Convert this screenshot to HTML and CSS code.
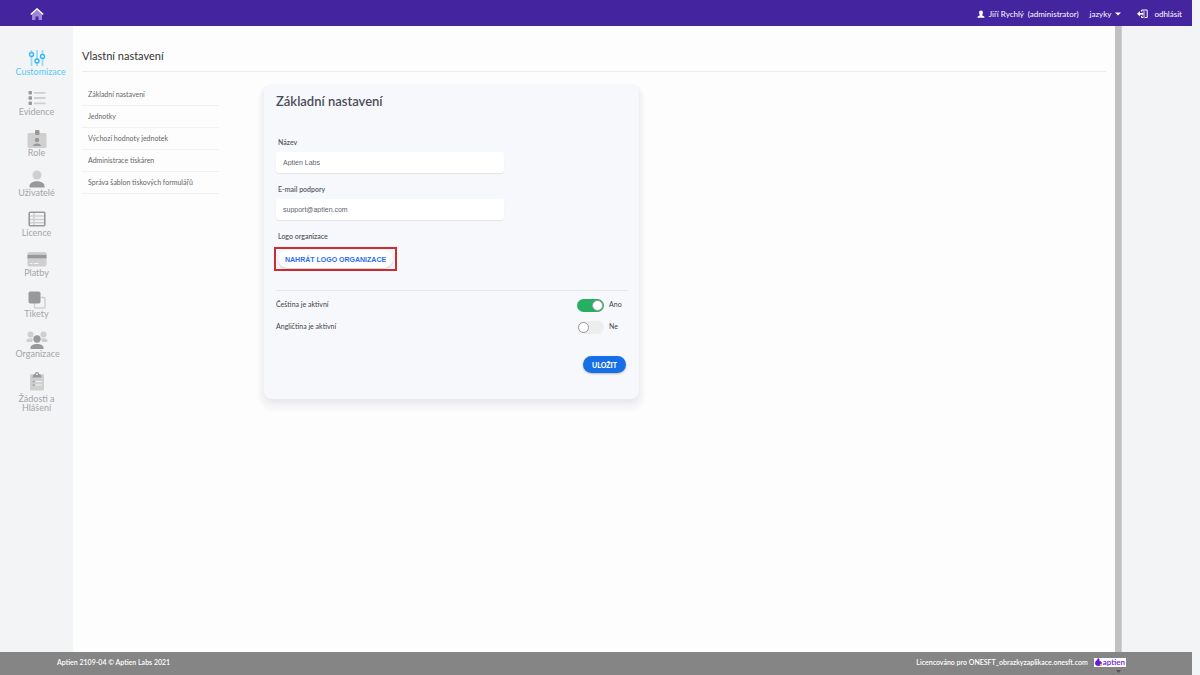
FILE: index.html
```html
<!DOCTYPE html>
<html lang="cs">
<head>
<meta charset="utf-8">
<title>Vlastní nastavení</title>
<link rel="stylesheet" href="styles.css">
</head>
<body>
<header class="topbar">
  <a class="home" href="#" aria-label="Domů"><svg width="14" height="12" viewBox="0 0 14 12"><path d="M2 6.500 7 2l5 4.500V12H8.500V8.500h-3V12H2z" fill="#9c87d3"/><path d="M.8 6.500 7 1l6.200 5.500" fill="none" stroke="#fff" stroke-width="1.600"/></svg></a>
  <nav class="account">
    <a class="user" href="#"><svg width="8" height="8" viewBox="0 0 8 8" fill="#fff"><path d="M4 .5c1.200 0 1.900.8 1.900 2C5.900 3.800 5.400 4.700 5 5.200c.3.500 2.600.4 2.600 2.500H.4c0-2.100 2.300-2 2.600-2.500-.4-.5-.9-1.400-.9-2.700 0-1.200.7-2 1.900-2z"/></svg><span>Jiří Rychlý&nbsp; (administrator)</span></a>
    <button class="lang" type="button">jazyky<svg width="6" height="4" viewBox="0 0 6 4"><path d="M0 .5h6l-3 3z" fill="#fff"/></svg></button>
    <a class="logout" href="#"><svg width="11" height="10" viewBox="0 0 11 10"><path d="M4.500 2.500V1h5.700v7.500H8M4.500 7v1.500H6" fill="none" stroke="#fff"/><path d="M5.500 1.500 8 2.200v7.300l-2.500-.8z" fill="#fff" opacity=".45"/><path d="M0 4.800 3 2v1.900h3.300v1.800H3v1.900z" fill="#fff"/></svg>odhlásit</a>
  </nav>
</header>
<div class="workspace">
  <nav class="sidebar">
    <a class="item active" href="#"><svg width="18" height="18" viewBox="0 0 18 18"><path d="M3.500 1v16M9 1v16M14.500 1v16" stroke="#9bdcf6" stroke-width="1.800"/><g fill="#f3f4f6" stroke="#2cb9f0" stroke-width="1.400"><circle cx="3.500" cy="5.500" r="2"/><circle cx="9" cy="12" r="2"/><circle cx="14.500" cy="7.500" r="2"/></g></svg><span>Customizace</span></a>
    <a class="item" href="#"><svg width="18" height="18" viewBox="0 0 18 18"><g fill="#999"><rect x=".5" y="2" width="3.500" height="3.500" rx=".8"/><rect x=".5" y="7.300" width="3.500" height="3.500" rx=".8"/><rect x=".5" y="12.600" width="3.500" height="3.500" rx=".8"/></g><path d="M6 3.800h11.500M6 9h11.500M6 14.300h11.500" stroke="#cfcfd0" stroke-width="1.800"/></svg><span>Evidence</span></a>
    <a class="item" href="#"><svg width="20" height="18" viewBox="0 0 20 18"><rect x=".5" y="3" width="19" height="15" rx="1.500" fill="#cfcfd0"/><g fill="#999"><rect x="8" y="0" width="4.500" height="5" rx="1"/><circle cx="10" cy="10" r="2.200"/><path d="M6 16c0-3.500 8-3.500 8 0z"/></g></svg><span>Role</span></a>
    <a class="item" href="#"><svg width="18" height="18" viewBox="0 0 18 18"><circle cx="9" cy="5" r="4.500" fill="#cfcfd0"/><path d="M1.500 17.500v-1.500C1.500 9.500 16.500 9.500 16.500 16v1.500z" fill="#999"/></svg><span>Uživatelé</span></a>
    <a class="item" href="#"><svg width="18" height="18" viewBox="0 0 18 18"><path d="M6 2v14M2 6h14M2 9.500h14M2 12.800h14" stroke="#cfcfd0" stroke-width="1.400"/><rect x="1.200" y="2.200" width="15.600" height="13.600" rx="1" fill="none" stroke="#999" stroke-width="1.600"/></svg><span>Licence</span></a>
    <a class="item" href="#"><svg width="20" height="18" viewBox="0 0 20 18"><rect x=".5" y="2" width="19" height="14.500" rx="1.500" fill="#cfcfd0"/><path d="M.5 4.800h19v3.500H.5z" fill="#999"/><path d="M3 13.500h2.500M7 13.500h4.500" stroke="#f3f4f6" stroke-width="1.200"/></svg><span>Platby</span></a>
    <a class="item" href="#"><svg width="18" height="18" viewBox="0 0 18 18"><path d="M12.500 6.500H16a1 1 0 0 1 1 1V16a1 1 0 0 1-1 1H7.500a1 1 0 0 1-1-1v-3.500" fill="none" stroke="#cfcfd0" stroke-width="1.500"/><rect x=".5" y=".5" width="12" height="12" rx="1.800" fill="#999"/></svg><span>Tikety</span></a>
    <a class="item" href="#"><svg width="22" height="18" viewBox="0 0 22 18"><g fill="#cfcfd0"><circle cx="4.500" cy="3.500" r="3"/><circle cx="17.500" cy="3.500" r="3"/><path d="M.5 11V9.800c0-2.500 4-3 6.500-2L6 11zM21.500 11V9.800c0-2.500-4-3-6.500-2L16 11z"/></g><g fill="#999"><circle cx="11" cy="8" r="3.700"/><path d="M4.500 18v-1.300c0-5 13-5 13 0V18z"/></g></svg><span>Organizace</span></a>
    <a class="item tall" href="#"><svg width="16" height="20" viewBox="0 0 16 20"><rect x="1" y="3" width="14" height="16.500" rx="1.500" fill="#cfcfd0"/><path d="M3.500 6.500C3.500 4 5 3.500 5.800 3 6 .3 10 .3 10.200 3c.8.500 2.300 1 2.300 3.500z" fill="#999"/><circle cx="8" cy="3.200" r=".9" fill="#f3f4f6"/><path d="M3.800 10.500h1.600M3.800 14h1.600" stroke="#999" stroke-width="1.600"/><path d="M6.800 10.500h6M6.800 14h6" stroke="#f3f4f6"/></svg><span>Žádosti a<br>Hlášení</span></a>
  </nav>
  <main class="main">
    <h1 class="page-title">Vlastní nastavení</h1>
    <div class="columns">
      <nav class="menu">
        <a href="#">Základní nastavení</a>
        <a href="#">Jednotky</a>
        <a href="#">Výchozí hodnoty jednotek</a>
        <a href="#">Administrace tiskáren</a>
        <a href="#">Správa šablon tiskových formulářů</a>
      </nav>
      <form class="card">
        <h2 class="card-title">Základní nastavení</h2>
        <label class="label" for="name">Název</label>
        <input class="text" id="name" type="text" value="Aptien Labs">
        <label class="label" for="mail">E-mail podpory</label>
        <input class="text" id="mail" type="text" value="support@aptien.com">
        <label class="label" for="upload">Logo organizace</label>
        <div class="highlight"><button class="upload" id="upload" type="button">NAHRÁT LOGO ORGANIZACE</button></div>
        <div class="toggles">
          <div class="toggle"><label for="cs">Čeština je aktivní</label><input class="switch" id="cs" type="checkbox" checked><span class="state">Ano</span></div>
          <div class="toggle"><label for="en">Angličtina je aktivní</label><input class="switch" id="en" type="checkbox"><span class="state">Ne</span></div>
        </div>
        <button class="save" type="button">ULOŽIT</button>
      </form>
    </div>
  </main>
  <div class="scrollbar"></div>
</div>
<footer class="footer">
  <span>Aptien 2109-04 © Aptien Labs 2021</span>
  <div class="license"><span>Licencováno pro ONESFT_obrazkyzaplikace.onesft.com</span>
    <a class="brand" href="#"><svg width="7" height="8" viewBox="0 0 7 8"><path d="M3 0c1.500.5 1.700 2 1.500 3C6 3 6.800 4 6.800 5.300 6.800 7 5.500 8 3.500 8 1.200 8 0 6.800 0 5.200 0 3 2.500 2.500 3 0z" fill="#6a16dc"/><circle cx="5.800" cy="6.800" r="1.100" fill="#fdb52c"/></svg>aptien</a>
  </div>
  <svg class="arrow" width="5" height="3" viewBox="0 0 5 3"><path d="M0 0h5L2.500 3z" fill="#505050"/></svg>
</footer>
</body>
</html>
```
FILE: styles.css
```css
*, *::before { box-sizing: border-box; }
body {
  margin: 0;
  min-height: 100vh;
  display: flex;
  flex-direction: column;
  background: #f3f4f6;
  color: #444;
  font: 7px/10px Lato, sans-serif;
}
a { color: inherit; text-decoration: none; }
button, input { font: inherit; margin: 0; border: 0; }
svg { flex: none; }

.topbar {
  height: 26px;
  margin-right: 8px;
  padding: 1px 10px 0 30px;
  display: flex;
  align-items: center;
  justify-content: space-between;
  background: #45249f;
  color: #fff;
  font-size: 8px;
}
.home { display: flex; }
.account, .user, .lang, .logout { display: flex; align-items: center; }
.user { gap: 4px; }
.lang { gap: 4px; margin-left: 11px; padding: 0; background: none; color: inherit; }
.logout { gap: 6px; margin-left: 16px; }

.workspace { flex: 1; display: flex; }
.sidebar {
  width: 73px;
  height: 387px;
  padding-top: 23px;
  display: flex;
  flex-direction: column;
  align-items: center;
  justify-content: space-between;
  color: #a5a5a8;
  font-size: 9px;
  line-height: 9px;
  text-align: center;
}
.item { width: 42px; height: 28px; display: flex; flex-direction: column; align-items: center; }
.item span { width: 100%; white-space: nowrap; }
.active { color: #5ac8f2; }
.tall { height: 42px; gap: 3px; }

.main { flex: 1; padding: 0 9px; background: #fdfdfd; }
.page-title {
  margin: 0;
  padding: 22px 0 8px;
  border-bottom: 1px solid #ececee;
  color: #333;
  font-size: 11px;
  font-weight: 400;
  line-height: 15px;
}
.columns { display: flex; align-items: flex-start; gap: 45px; padding-top: 12px; }
.menu { width: 137px; color: #666; }
.menu a { display: block; padding: 6px; line-height: 9px; border-bottom: 1px solid #f1f1f2; }
.card {
  width: 375px;
  padding: 9px 11px 26px 12px;
  display: flex;
  flex-direction: column;
  align-items: flex-start;
  border-radius: 8px;
  background: #f7f8fc;
  box-shadow: 0 4px 6px rgba(0, 0, 0, .07), 0 6px 3px 5px rgba(60, 70, 140, .03);
}
.card-title { margin: 0 0 28px; color: #4b4d58; font-size: 13px; font-weight: 600; line-height: 16px; }
.label { margin-bottom: 5px; padding-left: 2px; color: #555863; font-weight: 600; }
.text {
  width: 228px;
  height: 21px;
  margin-bottom: 11px;
  padding: 0 7px 1px;
  border-radius: 3px;
  background: #fff;
  color: #62656c;
  font-family: "Liberation Sans", sans-serif;
  box-shadow: 0 1px 1px rgba(0, 0, 0, .08);
}
.highlight { margin: 1px 0 19px -2px; padding: 1px 2px; display: flex; border: 2px solid #d02b33; }
.upload {
  height: 18px;
  padding: 0 7px;
  border-radius: 9px;
  background: #fff;
  color: #2e6bf0;
  font: bold 7px "Liberation Sans", sans-serif;
  box-shadow: 0 1px 2px rgba(0, 0, 0, .2);
}
.toggles { align-self: stretch; border-top: 1px solid #e6e7ea; padding-top: 8px; }
.toggle { height: 22px; display: flex; align-items: flex-start; }
.toggle label { flex: 1; }
.switch {
  appearance: none;
  width: 27px;
  height: 13px;
  padding: 1px;
  display: flex;
  border-radius: 7px;
  background: #ededed;
}
.switch::before { content: ""; width: 11px; height: 11px; border: 1px solid #999; border-radius: 50%; background: #fff; }
.switch:checked { justify-content: flex-end; background: #27ae60; }
.state { width: 24px; padding-left: 5px; }
.save {
  align-self: flex-end;
  width: 43px;
  height: 17px;
  margin: 13px 2px 0 0;
  padding: 0;
  border-radius: 9px;
  background: #166fe5;
  color: #fff;
  font-weight: 900;
  box-shadow: 0 1px 2px rgba(0, 0, 0, .25);
}
.scrollbar { width: 7px; margin-right: 78px; background: #c1c1c1; border-right: 1px solid #d0d0d0; }

.footer {
  position: relative;
  height: 23px;
  margin-right: 8px;
  padding: 0 66px 3px 57px;
  display: flex;
  align-items: center;
  justify-content: space-between;
  background: #858585;
  color: #fff;
  font-weight: 600;
}
.license { display: flex; align-items: center; gap: 6px; }
.brand {
  height: 9px;
  padding: 0 1px;
  display: flex;
  align-items: center;
  gap: 1px;
  background: #fff;
  color: #6a16dc;
  font-size: 8px;
}
.arrow { position: absolute; right: 71px; bottom: 2px; }
```
